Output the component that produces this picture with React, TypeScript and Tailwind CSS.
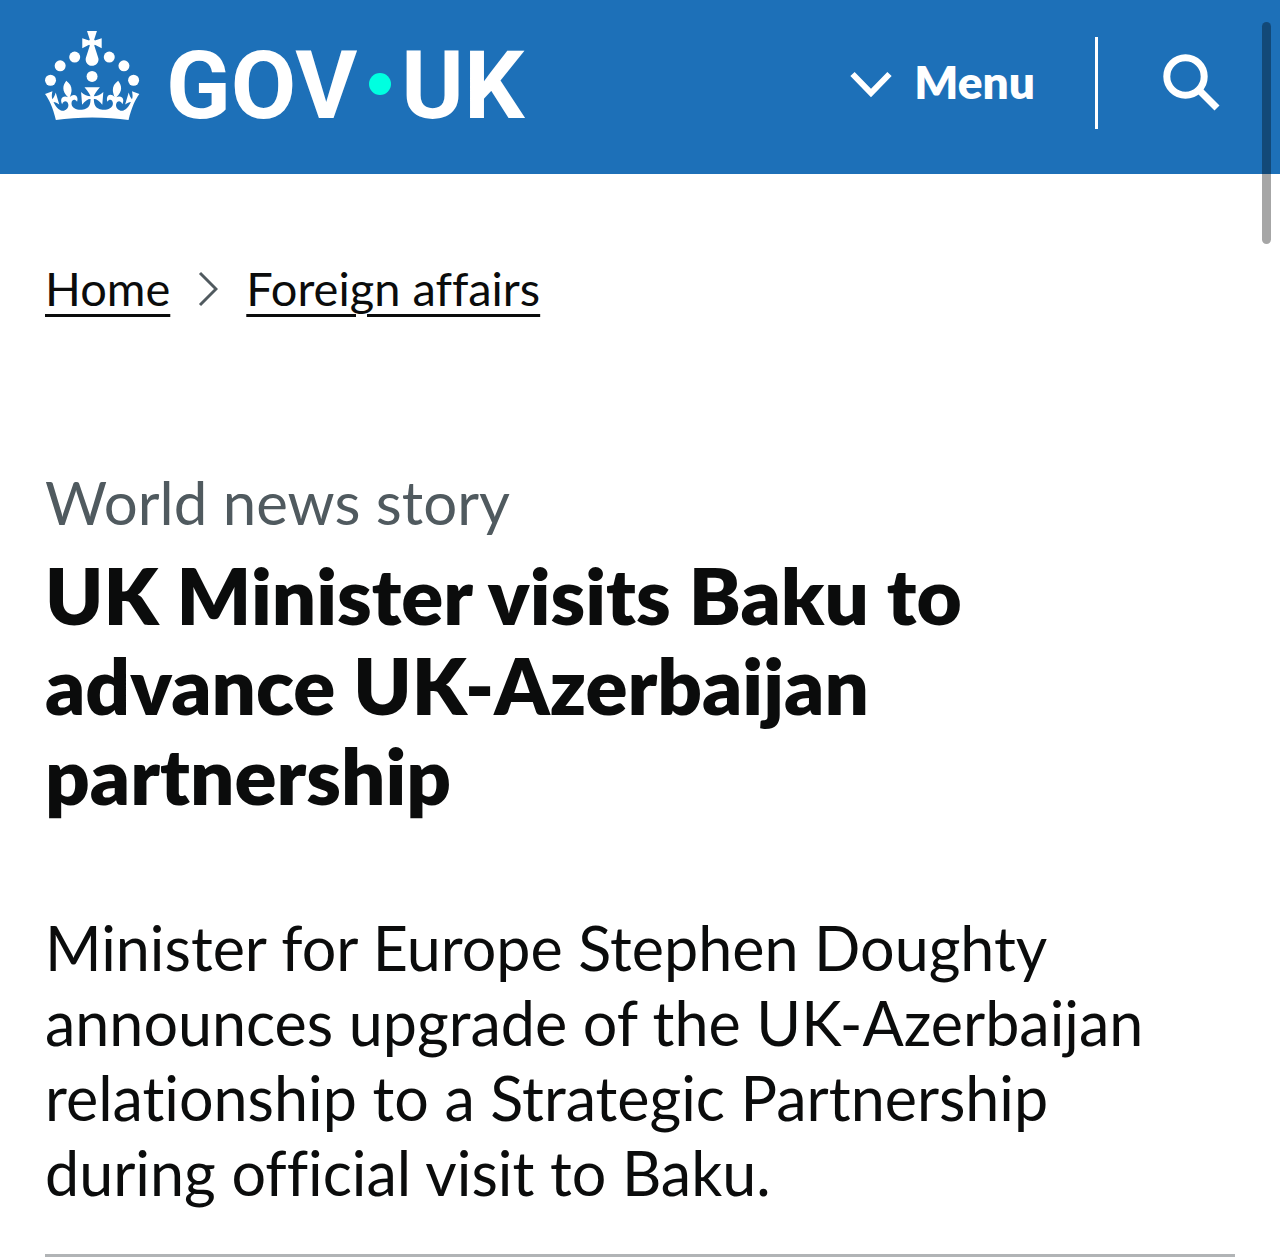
import React from 'react';

const breadcrumbs = [
  { label: 'Home', href: '#home' },
  { label: 'Foreign affairs', href: '#foreign-affairs' },
];

const Crown: React.FC = () => (
  <svg viewBox="0 0 64 60" className="h-[89px] w-[95px] shrink-0" fill="currentColor" aria-hidden="true">
    <circle cx="20" cy="17.6" r="3.7" />
    <circle cx="10.2" cy="23.5" r="3.7" />
    <circle cx="3.7" cy="33.2" r="3.7" />
    <circle cx="31.7" cy="30.6" r="3.7" />
    <circle cx="43.3" cy="17.6" r="3.7" />
    <circle cx="53.2" cy="23.5" r="3.7" />
    <circle cx="59.7" cy="33.2" r="3.7" />
    <path d="M33.1,9.8c.2-.1.3-.3.5-.5l4.6,2.4v-6.8l-4.6,1.5c-.1-.2-.3-.3-.5-.5l1.9-5.9h-6.7l1.9,5.9c-.2.1-.3.3-.5.5l-4.6-1.5v6.8l4.6-2.4c.1.2.3.3.5.5l-2.6,8c-.9,2.8,1.2,5.7,4.1,5.7h0c3,0,5.1-2.9,4.1-5.7l-2.6-8ZM37,37.9s-3.4,3.8-4.1,6.1c2.2,0,4.2-.5,6.4-2.8l-.7,8.5c-2-2.8-4.4-4.1-5.7-3.8.1,3.1.5,6.7,5.8,7.2,3.7.3,6.7-1.5,7-3.8.4-2.6-2-4.3-3.7-1.6-1.4-4.5,2.4-6.1,4.9-3.2-1.9-4.5-1.8-7.7,2.4-10.9,3,4,2.6,7.3-1.2,11.1,2.4-1.3,6.2,0,4,4.6-1.2-2.8-3.7-2.2-4.2.2-.3,1.7.7,3.7,3,4.2,1.9.3,4.7-.9,7-5.9-1.3,0-2.4.7-3.9,1.7l2.4-8c.6,2.3,1.4,3.7,2.2,4.5.6-1.6.5-2.8,0-5.3l5,1.8c-2.6,3.6-5.2,8.7-7.3,17.5-7.4-1.1-15.7-1.7-24.5-1.7h0c-8.8,0-17.1.6-24.5,1.7-2.1-8.9-4.7-13.9-7.3-17.5l5-1.8c-.5,2.5-.6,3.7,0,5.3.8-.8,1.6-2.3,2.2-4.5l2.4,8c-1.5-1-2.6-1.7-3.9-1.7,2.3,5,5.2,6.2,7,5.9,2.3-.4,3.3-2.4,3-4.2-.5-2.4-3-3.1-4.2-.2-2.2-4.6,1.6-6,4-4.6-3.7-3.7-4.2-7.1-1.2-11.1,4.2,3.2,4.3,6.4,2.4,10.9,2.5-2.8,6.3-1.3,4.9,3.2-1.8-2.7-4.1-1-3.7,1.6.3,2.3,3.3,4.1,7,3.8,5.4-.5,5.7-4.2,5.8-7.2-1.3-.2-3.7,1-5.7,3.8l-.7-8.5c2.2,2.3,4.2,2.7,6.4,2.8-.7-2.3-4.1-6.1-4.1-6.1h10.6Z" />
  </svg>
);

const Header: React.FC = () => (
  <header className="flex h-[174px] items-start justify-between bg-[#1d70b8] pl-[45px] pr-[60px] text-white">
    <a href="#gov-uk" aria-label="GOV.UK" className="mt-[31px] flex items-start">
      <Crown />
      {/* Wordmark */}
      <span className="ml-[26px] flex items-center font-['Roboto',sans-serif] text-[95px] font-bold leading-[110px]">
        GOV
        <span className="mb-1 ml-3 mr-2.5 size-[22px] rounded-full bg-[#00ffe0]" />
        UK
      </span>
    </a>

    <div className="mt-[37px] flex h-[92px] items-center">
      <button type="button" className="flex h-full items-center border-r-[3px] border-white pr-[60px] text-[46px] font-extrabold">
        <svg viewBox="0 0 42 30" className="mr-[22px] h-[30px] w-[42px]" fill="none" stroke="currentColor" strokeWidth="6" aria-hidden="true">
          <path d="M2.5 6 L21 25 L39.5 6" />
        </svg>
        <span className="pb-1">Menu</span>
      </button>
      <button type="button" aria-label="Search" className="ml-[65px]">
        <svg viewBox="0 0 57 58" className="h-[58px] w-[57px]" fill="none" stroke="currentColor" aria-hidden="true">
          <circle cx="22.5" cy="22.5" r="18.7" strokeWidth="7" />
          <path d="M36 36 L54 54" strokeWidth="7" />
        </svg>
      </button>
    </div>
  </header>
);

const Breadcrumbs: React.FC = () => (
  <nav aria-label="Breadcrumb">
    <ol className="flex items-center text-[47px] leading-[60px]">
      {breadcrumbs.map((item, index) => (
        <li key={item.href} className="flex items-center">
          {index > 0 && (
            <svg viewBox="0 0 20 38" className="mx-7 h-[38px] w-[20px]" fill="none" stroke="#505a5f" strokeWidth="3" aria-hidden="true">
              <path d="M2 4 L18 20 L2 36" />
            </svg>
          )}
          <a href={item.href} className="underline decoration-[3px] underline-offset-8">
            {item.label}
          </a>
        </li>
      ))}
    </ol>
  </nav>
);

export default function App() {
  return (
    <div className="relative bg-white font-['Lato',sans-serif] text-[#0b0c0c] [font-variant-ligatures:none]">
      <Header />

      <main className="px-[45px] pt-[84px]">
        <Breadcrumbs />

        <div className="mt-[147px]">
          <p className="text-[60px] leading-[75px] text-[#505a5f]">World news story</p>
          <h1 className="mt-[10px] text-[78px] font-extrabold leading-[90px]">
            UK Minister visits Baku to advance UK-Azerbaijan partnership
          </h1>
        </div>

        <div className="mt-[90px] border-b-[3px] border-[#b1b4b6] pb-[44px]">
          <p className="pr-12 text-[61px] leading-[75px]">
            Minister for Europe Stephen Doughty announces upgrade of the UK-Azerbaijan relationship to a Strategic
            Partnership during official visit to Baku.
          </p>
        </div>
      </main>

      {/* Scroll indicator */}
      <div className="absolute right-[9px] top-[22px] h-[222px] w-[9px] rounded-full bg-black/35" />
    </div>
  );
}
